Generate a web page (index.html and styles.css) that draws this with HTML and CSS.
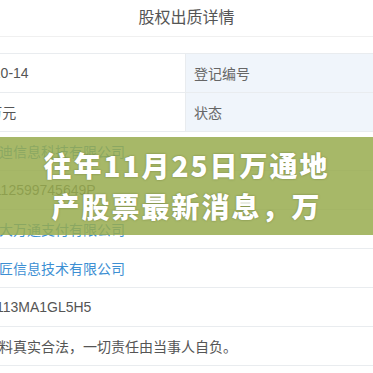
FILE: index.html
```html
<!DOCTYPE html>
<html lang="zh-CN">
  <head>
    <meta charset="UTF-8" />
    <meta name="viewport" content="width=device-width, initial-scale=1.0" />
    <title>股权出质详情</title>
    <link rel="stylesheet" href="styles.css">
  </head>
  <body>
    <div class="modal">
      <div class="modal-header">股权出质详情</div>

      <div class="modal-body">
        <table class="detail-table">
          <colgroup>
            <col class="col-label" />
            <col class="col-value" />
            <col class="col-label2" />
            <col class="col-value2" />
          </colgroup>
          <tr>
            <td class="label">登记日期</td>
            <td>2019-10-14</td>
            <td class="label label-right">登记编号</td>
            <td>-</td>
          </tr>
          <tr>
            <td class="label">出质股权数额</td>
            <td>5000万元</td>
            <td class="label label-right">状态</td>
            <td>有效</td>
          </tr>
          <tr>
            <td class="label">出质人</td>
            <td colspan="3"><a class="link">深圳易迪信息科技有限公司</a></td>
          </tr>
          <tr>
            <td class="label">出质人证照号</td>
            <td colspan="3">91110112599745649P</td>
          </tr>
          <tr>
            <td class="label">质权人</td>
            <td colspan="3"><a class="link">北京市大万通支付有限公司</a></td>
          </tr>
          <tr>
            <td class="label">标的企业</td>
            <td colspan="3"><a class="link">杭州巧匠信息技术有限公司</a></td>
          </tr>
          <tr>
            <td class="label">质权人证照号</td>
            <td colspan="3">91440113MA1GL5H5</td>
          </tr>
          <tr>
            <td class="label">备注</td>
            <td colspan="3">以上资料真实合法，一切责任由当事人自负。</td>
          </tr>
        </table>

        <!-- headline banner over the table -->
        <div class="banner">往年11月25日万通地<br />产股票最新消息，万</div>
      </div>
    </div>
  </body>
</html>
```

FILE: styles.css
```css
body {
  margin: 0;
  padding: 0;
  background: #fff;
  font-family: "Liberation Sans", "Noto Sans CJK SC", sans-serif;
  color: #333;
}
.modal {
  width: 373px;
  height: 373px;
  overflow: hidden;
  position: relative;
}
.modal-header {
  height: 36px;
  line-height: 32px;
  text-align: center;
  font-family: "Noto Sans CJK SC", sans-serif;
  font-size: 16px;
  color: #555;
  border-bottom: 1px solid #f0f0f0;
}
.modal-body {
  padding-top: 16px;
  position: relative;
}
.detail-table {
  border-collapse: collapse;
  table-layout: fixed;
  width: 757px;
  margin-left: -172px;
  font-size: 14px;
}
.col-label {
  width: 120px;
}
.col-value {
  width: 237px;
}
.col-label2 {
  width: 200px;
}
.col-value2 {
  width: 200px;
}
.detail-table td {
  height: 38px;
  padding: 0 8px;
  border: 1px solid #e9ecef;
  white-space: nowrap;
  color: #555;
}
.detail-table .label {
  background: #f0f5fb;
  color: #666;
}
.link {
  color: #3d8fd3;
  text-decoration: none;
}
.banner {
  position: absolute;
  left: 0;
  right: 0;
  top: 100px;
  height: 98px;
  box-sizing: border-box;
  padding-top: 8px;
  background: rgba(152, 171, 78, 0.85);
  color: #fff;
  text-align: center;
  font-family: "Noto Sans CJK SC", sans-serif;
  font-weight: 900;
  font-size: 28px;
  letter-spacing: 2px;
  line-height: 41px;
  text-shadow: 0 0 2px rgba(60, 70, 20, 0.5);
}
```
